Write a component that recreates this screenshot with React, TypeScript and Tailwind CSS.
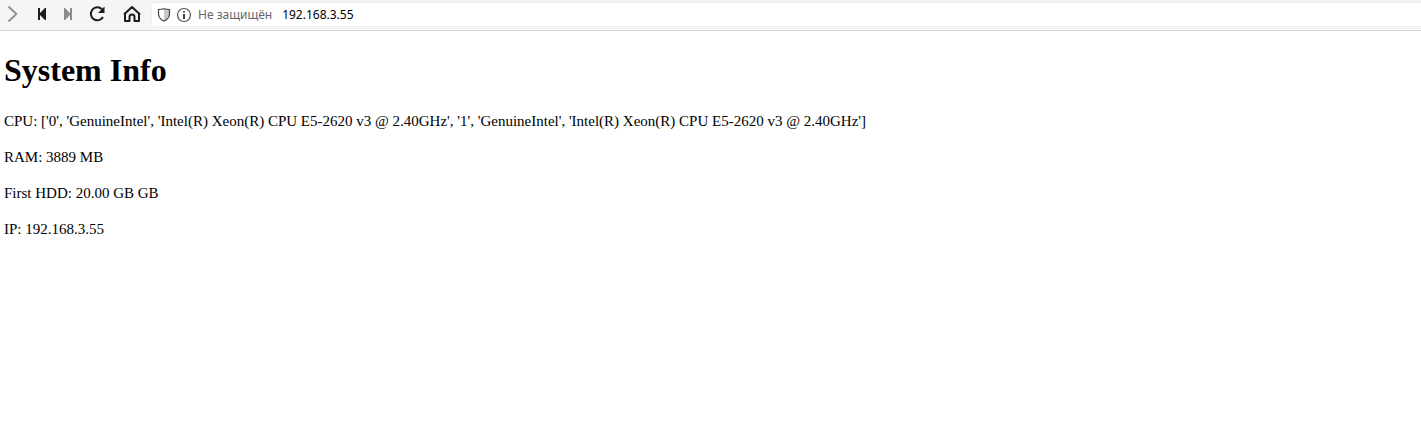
import React from "react";

const info = [
  "CPU: ['0', 'GenuineIntel', 'Intel(R) Xeon(R) CPU E5-2620 v3 @ 2.40GHz', '1', 'GenuineIntel', 'Intel(R) Xeon(R) CPU E5-2620 v3 @ 2.40GHz']",
  "RAM: 3889 MB",
  "First HDD: 20.00 GB GB",
  "IP: 192.168.3.55",
];

function ToolButton({ label, children }: { label: string; children: React.ReactNode }) {
  return (
    <button type="button" aria-label={label} className="flex h-5 w-5 shrink-0 items-center justify-center">
      {children}
    </button>
  );
}

function Toolbar() {
  return (
    <header className="flex h-[31px] items-start border-b border-[#d6d6d6] bg-[#f5f5f5] pl-[2px]">
      <nav aria-label="Навигация" className="flex shrink-0 items-center pt-1">
        <ToolButton label="Вперёд">
          <svg width="20" height="20" viewBox="0 0 20 20" fill="none" stroke="#929292" strokeWidth="2">
            <path d="M6.5 2.5 14.3 10 6.5 17.5" />
          </svg>
        </ToolButton>
        <div className="ml-[10px] flex gap-[6px]">
          <ToolButton label="В начало">
            <svg width="20" height="20" viewBox="0 0 20 20" fill="#1c1c1c">
              <path d="M6 4h2v5l5-5H14v12h-1L8 11v5H6z" />
            </svg>
          </ToolButton>
          <ToolButton label="В конец">
            <svg width="20" height="20" viewBox="0 0 20 20" fill="#8b8b8b">
              <path d="M14 4h-2v5L7 4H6v12h1L12 11v5h2z" />
            </svg>
          </ToolButton>
        </div>
        <div className="ml-[9px] flex gap-[15px]">
          <ToolButton label="Обновить">
            <svg width="20" height="20" viewBox="0 0 20 20" fill="none">
              <path d="M15 5.200A6.500 6.500 0 1 0 16 13" stroke="#1c1c1c" strokeWidth="2" />
              <path d="M17.500 2.500v6.500h-6.500z" fill="#1c1c1c" />
            </svg>
          </ToolButton>
          <ToolButton label="Домашняя страница">
            <svg width="20" height="20" viewBox="0 0 20 20" fill="none" stroke="#1c1c1c" strokeWidth="2" strokeLinejoin="round">
              <path d="M3 17V9.500L10 3l7 6.500V17h-4.500v-4a2.500 2.500 0 0 0-5 0v4zM2 10.500l1-1M18 10.500l-1-1" />
            </svg>
          </ToolButton>
        </div>
      </nav>
      <div className="ml-[9px] mt-[2px] flex h-[25px] min-w-0 flex-1 items-center rounded-l border border-r-0 border-[#eeeeee] bg-white pl-[5px]">
        <svg className="shrink-0" width="14" height="16" viewBox="0 0 14 16" fill="none">
          <path d="M7 2.500v11c3-1.500 5-3.500 5-6.500V2.500z" fill="#c8c8c8" />
          <path d="M1.500 2.500Q4.500 2.500 7 1.700q2.500.8 5.500.8V7c0 3.500-2 5.500-5.500 7C3.500 12.500 1.500 10.500 1.500 7z" stroke="#444" strokeWidth="1.200" />
        </svg>
        <svg className="ml-[5px] shrink-0" width="16" height="16" viewBox="0 0 16 16" fill="none">
          <circle cx="8" cy="8" r="6.500" stroke="#555" strokeWidth="1.200" />
          <path d="M7 4h2v1.600H7zM7 7h2v5H7z" fill="#444" />
        </svg>
        <label htmlFor="address" className="ml-[6px] shrink-0 text-xs text-[#666]">
          Не защищён
        </label>
        <input
          id="address"
          type="text"
          defaultValue="192.168.3.55"
          className="ml-[10px] min-w-0 flex-1 bg-transparent text-xs text-black outline-none"
        />
      </div>
    </header>
  );
}

export default function App() {
  return (
    <div className="min-h-screen bg-white font-['Noto_Sans','Open_Sans',sans-serif] text-black">
      <Toolbar />
      <main className="px-1 pt-[21px] font-['Liberation_Serif',serif]">
        <h1 className="text-[32px] font-bold leading-9">System Info</h1>
        <div className="mt-[23px] flex flex-col gap-4 text-[15px] leading-5">
          {info.map((line) => (
            <p key={line}>{line}</p>
          ))}
        </div>
      </main>
    </div>
  );
}
